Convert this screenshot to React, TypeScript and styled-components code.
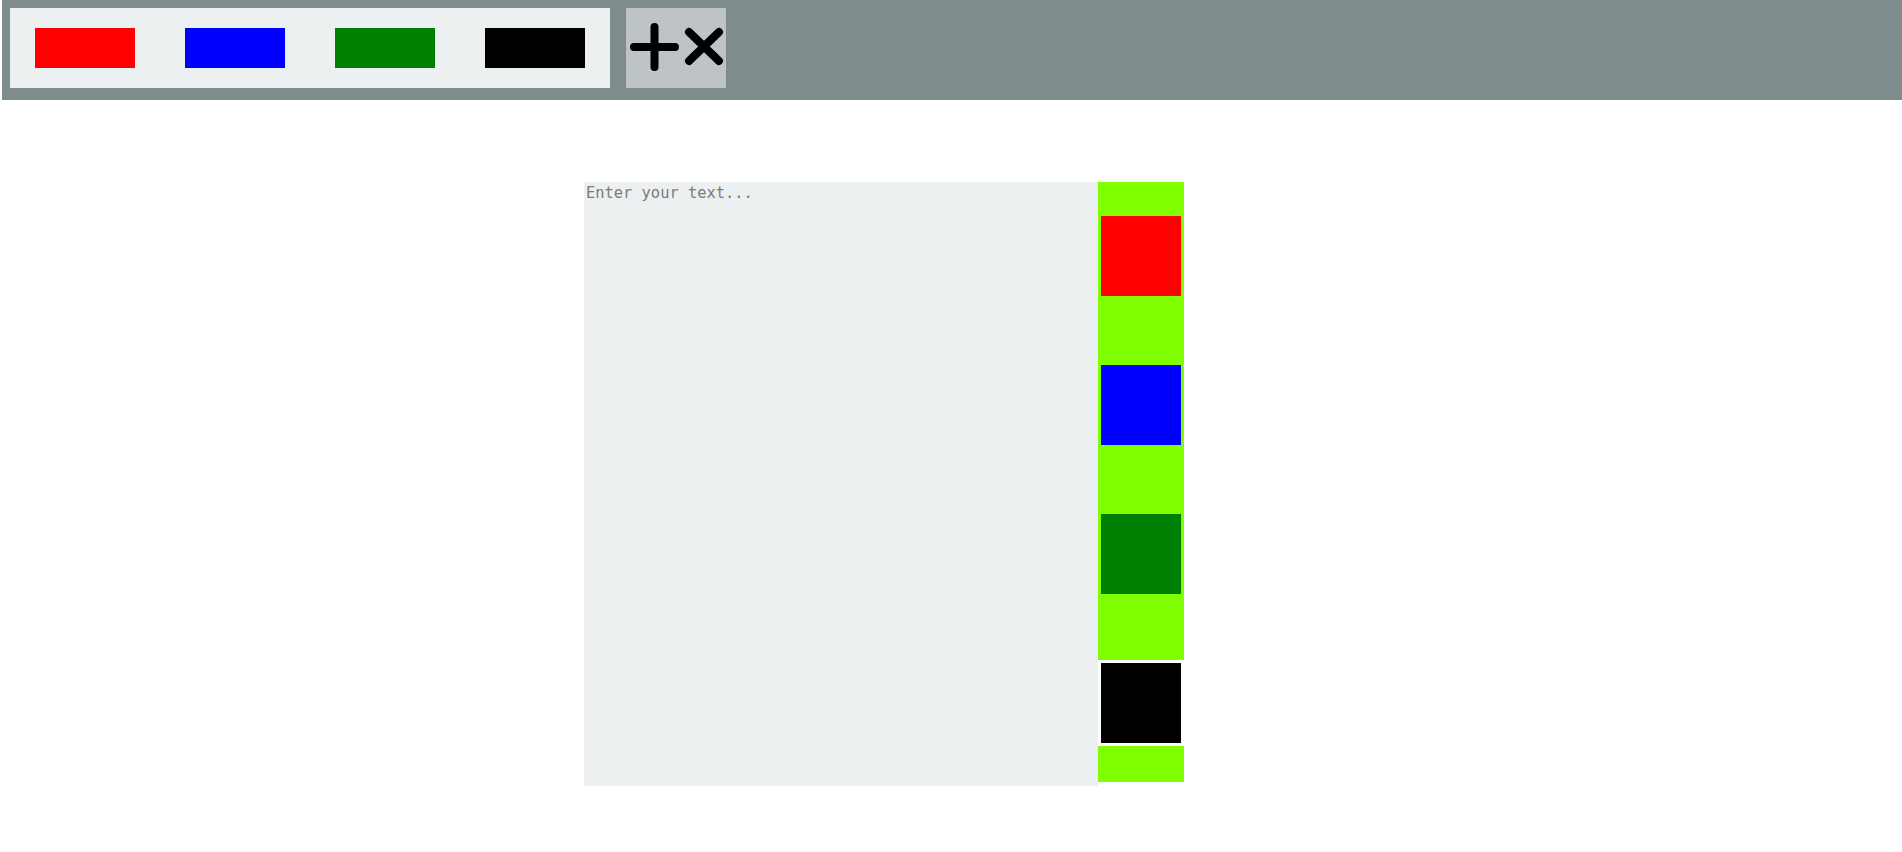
import React, { useState } from "react";
import styled, { createGlobalStyle } from "styled-components";

const Global = createGlobalStyle`
  html, body { margin: 0; padding: 0; background: #ffffff; }
  body { font-family: "Liberation Sans", Arial, sans-serif; }
`;

const COLORS = ["#ff0000", "#0000ff", "#008000", "#000000"];

const Header = styled.header`
  margin-left: 2px;
  height: 100px;
  box-sizing: border-box;
  padding: 8px 8px;
  background: #7f8c8d;
  display: flex;
  align-items: flex-start;
  gap: 16px;
`;

const Palette = styled.div`
  width: 600px;
  height: 80px;
  box-sizing: border-box;
  padding: 20px 25px;
  background: #ecf0f1;
  display: flex;
  gap: 50px;
`;

const Swatch = styled.button<{ $color: string }>`
  width: 100px;
  height: 40px;
  border: none;
  padding: 0;
  background: ${(p) => p.$color};
  cursor: pointer;
`;

const ToolButton = styled.button`
  width: 100px;
  height: 80px;
  border: none;
  padding: 0;
  background: #bdc3c7;
  display: flex;
  align-items: flex-start;
  cursor: pointer;
`;

const Editor = styled.main`
  display: flex;
  margin: 82px 0 0 584px;
`;

const TextArea = styled.textarea`
  width: 514px;
  height: 604px;
  box-sizing: border-box;
  border: none;
  outline: none;
  resize: none;
  margin: 0;
  padding: 2px;
  background: #ecf0f1;
  font-family: "DejaVu Sans Mono", monospace;
  font-size: 15.4px;
  line-height: 1.2;
  color: #333;
  &::placeholder { color: #7b7b7b; }
`;

const Side = styled.aside`
  width: 86px;
  height: 600px;
  box-sizing: border-box;
  padding: 31px 0 36px;
  background: #7fff00;
  display: flex;
  flex-direction: column;
  gap: 63px;
`;

const SideItem = styled.button<{ $color: string; $active: boolean }>`
  width: 86px;
  height: 86px;
  box-sizing: border-box;
  margin: 0;
  padding: 0;
  border: 3px solid ${(p) => (p.$active ? "#ffffff" : "#7fff00")};
  background: ${(p) => p.$color};
  cursor: pointer;
`;

const PlusTimes = () => (
  <svg width="100" height="80" viewBox="0 0 100 80" fill="none" stroke="#000" strokeWidth="8" strokeLinecap="round">
    <path d="M8 39H49M28.5 19V59" />
    <path d="M63 24L93 53M93 24L63 53" />
  </svg>
);

export default function App() {
  const [active, setActive] = useState(3);
  return (
    <>
      <Global />
      <Header>
        <Palette>
          {COLORS.map((c) => (
            <Swatch key={c} $color={c} aria-label={c} />
          ))}
        </Palette>
        <ToolButton aria-label="add or remove">
          <PlusTimes />
        </ToolButton>
      </Header>
      <Editor>
        <TextArea placeholder="Enter your text..." />
        <Side>
          {COLORS.map((c, i) => (
            <SideItem key={c} $color={c} $active={i === active} onClick={() => setActive(i)} aria-label={c} />
          ))}
        </Side>
      </Editor>
    </>
  );
}
